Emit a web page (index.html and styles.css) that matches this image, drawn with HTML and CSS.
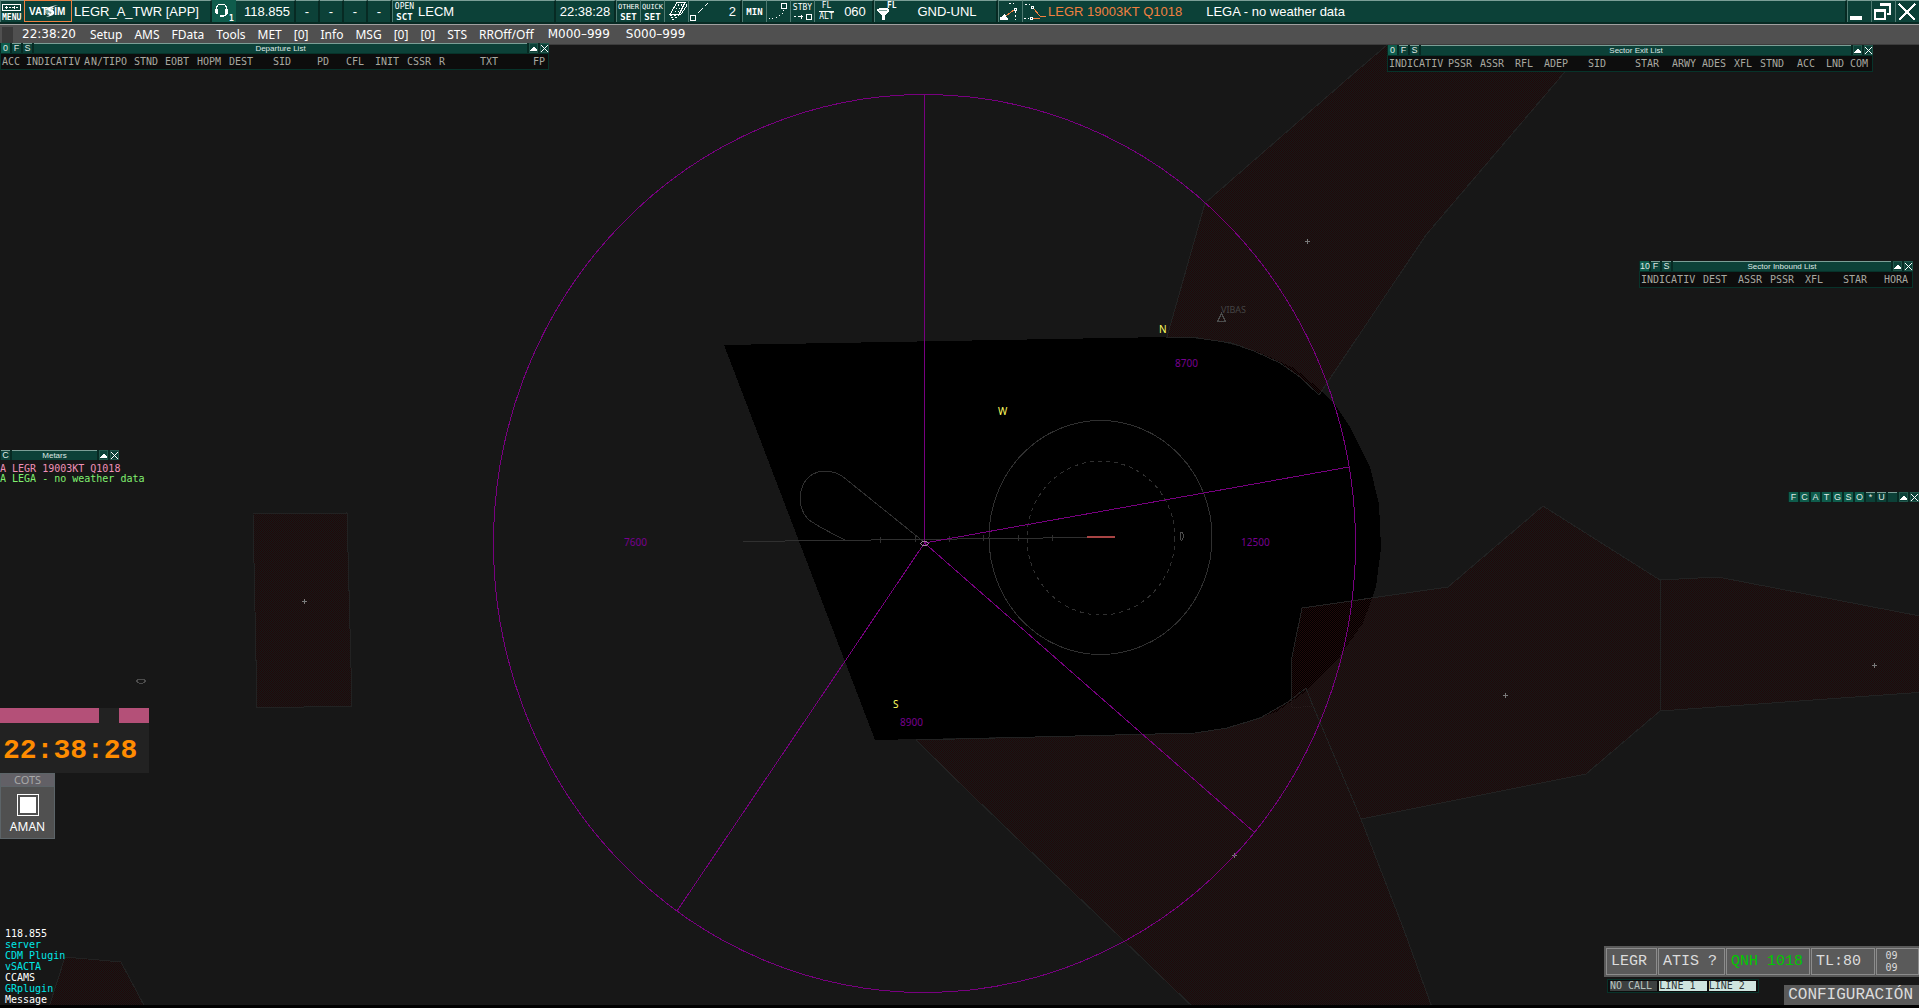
FILE: index.html
```html
<!DOCTYPE html>
<html lang="en">
<head>
    <meta charset="UTF-8">
    <meta name="viewport" content="width=device-width, initial-scale=1.0">
    <title>LEGR_A_TWR Radar</title>
    <link rel="stylesheet" href="styles.css">
</head>
<body>
    <header class="toolbar">
        <button class="tool" aria-label="Menu">
            <svg viewBox="0 0 23 21" width="23" height="21">
                <path class="line" d="M1.500 3.500h18v6h-18zM4 6.500h3M8 6.500h2M11 6.500h3M15 6.500h2M5.500 5v3M13.500 5v3"/>
                <text class="icon-text" x="1" y="19">MENU</text>
            </svg>
        </button>
        <button class="tool tool-logo" aria-label="VATSIM">
            <svg viewBox="0 0 46 20" width="46" height="20">
                <circle class="logo-globe" cx="24" cy="10" r="4"/>
                <text class="logo-text" x="4" y="14">VATSIM</text>
                <path class="logo-swirl" d="M33 4q-9 1-13 5q4-1 6 1q2 3-5 6q9-1 8-5q0-2-4-3q2-2 8-4z"/>
            </svg>
        </button>
        <div class="readout">LEGR_A_TWR [APP]</div>
        <button class="tool tool-on" aria-label="Voice">
            <svg viewBox="0 0 23 21" width="23" height="21">
                <path class="line" d="M3.500 10v-2q0-5 5-5t5 5v2M13.500 12q0 3-4 3"/>
                <path class="solid" d="M2 8h3v5H3l-1-1zM12 8h3v4l-1 1h-2zM7 14h4v2H7z"/>
                <text class="icon-text" x="16" y="20">1</text>
            </svg>
        </button>
        <div class="readout readout-right">118.855</div>
        <button class="readout readout-center">-</button>
        <button class="readout readout-center">-</button>
        <button class="readout readout-center">-</button>
        <button class="readout readout-center">-</button>
        <button class="tool tool-text"><span>OPEN</span><b>SCT</b></button>
        <div class="readout">LECM</div>
        <div class="readout readout-center">22:38:28</div>
        <button class="tool tool-text tool-narrow"><span>OTHER</span><b>SET</b></button>
        <button class="tool tool-text tool-narrow"><span>QUICK</span><b>SET</b></button>
        <button class="tool" aria-label="Sector layers">
            <svg viewBox="0 0 23 21" width="23" height="21">
                <path class="line" d="M12 1.500h8l-6 12h-9zM21.500 3v2l-6 9"/>
                <path class="line dots" d="M14 3l-4 8M17 3l-4 8M5 14.500h9M6 16.500h6M7 18.500h3"/>
            </svg>
        </button>
        <button class="tool" aria-label="Distance line">
            <svg viewBox="0 0 23 21" width="23" height="21">
                <path class="line" d="M1.500 14.500h5v5h-5zM9 12l5-5M16 5l3-3"/>
            </svg>
        </button>
        <div class="readout readout-right">2</div>
        <button class="tool tool-text"><b>MIN</b></button>
        <button class="tool" aria-label="History dots">
            <svg viewBox="0 0 23 21" width="23" height="21">
                <path class="line" d="M14.500 2.500h5v5h-5z"/>
                <path class="solid" d="M2 17h1v1H2zM5 17h1v1H5zM9 16h1v1H9zM12 14h1v1h-1zM15 12h1v1h-1zM16 9h1v1h-1z"/>
            </svg>
        </button>
        <button class="tool tool-text" aria-label="Standby">
            <span>STBY</span>
            <svg viewBox="0 0 20 8" width="20" height="8">
                <path class="line" d="M1 3.500h2M5 3.500h5M8.500 1.500v4M13.500 1.500h5v5h-5z"/>
            </svg>
        </button>
        <button class="tool tool-text tool-split"><span>FL</span><span>ALT</span></button>
        <div class="readout readout-center">060</div>
        <button class="tool" aria-label="Level filter">
            <svg viewBox="0 0 23 21" width="23" height="21">
                <path class="solid" d="M2 9q0-2 6-2t6 2v1l-4 4v5H7v-5L2 10z"/>
                <path class="shade" d="M4 9h8v1H4z"/>
                <text class="icon-text" x="12" y="7">FL</text>
            </svg>
        </button>
        <div class="readout readout-center">GND-UNL</div>
        <button class="tool" aria-label="Route display">
            <svg viewBox="0 0 23 21" width="23" height="21">
                <path class="line warm" d="M7 15l9-7"/>
                <path class="solid" d="M1 19h8v-2H8l-2-4H5l-2 3H1z"/>
                <path class="line dots" d="M10 2.500h5M16.500 10v9"/>
                <path class="line" d="M15.500 7.500h2v2h-2z"/>
            </svg>
        </button>
        <button class="tool" aria-label="Conflict display">
            <svg viewBox="0 0 23 21" width="23" height="21">
                <path class="line warm" d="M10 7l7 8M10 17.500h7M17 15.500h6"/>
                <path class="line dots" d="M2 3.500h5M1 17.500h5"/>
                <path class="line" d="M8.500 5.500h2v2h-2zM7.500 16.500h2v2h-2z"/>
            </svg>
        </button>
        <div class="readout readout-metar"><span class="warm-text">LEGR 19003KT Q1018</span><span>LEGA - no weather data</span></div>
        <button class="tool" aria-label="Minimize">
            <svg viewBox="0 0 23 21" width="23" height="21"><path class="solid" d="M2 15h12v4H2z"/></svg>
        </button>
        <button class="tool" aria-label="Restore">
            <svg viewBox="0 0 23 21" width="23" height="21">
                <path class="solid" d="M8 2h11v12h-4v-2h2V5H8zM2 8h12v11H2zM4 11v6h8v-6z" fill-rule="evenodd"/>
            </svg>
        </button>
        <button class="tool" aria-label="Close">
            <svg viewBox="0 0 23 21" width="23" height="21"><path class="cross" d="M3 3l16 16M19 3L3 19"/></svg>
        </button>
    </header>

    <nav class="menubar">
        <span class="menubar-grip"></span>
        <span class="menu-number">22:38:20</span>
        <button>Setup</button>
        <button>AMS</button>
        <button>FData</button>
        <button>Tools</button>
        <button>MET</button>
        <button>[0]</button>
        <button>Info</button>
        <button>MSG</button>
        <button>[0]</button>
        <button>[0]</button>
        <button>STS</button>
        <button>RROff/Off</button>
        <button class="menu-number">M000–999</button>
        <button class="menu-number">S000–999</button>
    </nav>

    <main class="radar">
        <svg class="map" viewBox="0 45 1919 960" preserveAspectRatio="xMinYMin slice">
            <defs>
                <pattern id="danger" width="2" height="2" patternUnits="userSpaceOnUse">
                    <path d="M0 0h1v1H0zM1 1h1v1H1z"/>
                </pattern>
            </defs>

            <!-- CTR -->
            <polygon class="ctr" points="724,345 1166,337 1191,338 1218,341 1254,350 1294,368 1318,388 1334,403 1350,427 1370,467 1379,504 1381,548 1376,587 1363,623 1336,662 1305,692 1276,712 1227,728 1195,733 875,740"/>

            <!-- restricted areas -->
            <g class="areas">
                <polygon points="1387,45 1353,74 1205,203 1167,337 1191,337 1231,343 1254,351 1280,363 1300,377 1319,395 1426,235 1564,73 1590,45"/>
                <polygon points="1302,608 1448,587 1543,506 1660,580 1660,711 1586,774 1361,819 1313,706 1291,708 1292,657"/>
                <polygon points="1660,580 1718,577 1925,617 1925,692 1660,711"/>
                <polygon points="916,740 1195,733 1227,728 1260,718 1288,702 1306,688 1313,706 1361,819 1404,930 1433,1010 1196,1010 975,798"/>
                <polygon points="253,514 347,513 352,706 257,708"/>
                <polygon points="65,957 121,962 145,1007 49,1007"/>
            </g>
            <path class="marks" d="M302 601.500h5M304.500 599v5M1305 241.500h5M1307.500 239v5M1503 695.500h5M1505.500 693v5M1872 665.500h5M1874.500 663v5M1232 855.500h5M1234.500 853v5"/>

            <!-- procedures around the field -->
            <g class="procedures">
                <ellipse cx="1100.500" cy="537.500" rx="111.500" ry="117"/>
                <ellipse class="dashed" cx="1101" cy="538" rx="74" ry="77"/>
                <path d="M743 541.500L1087 537.500M880.500 537v6M915.500 536v6M949.500 536v6M983.500 535v6M1018.500 535v6M1052.500 535v6"/>
                <path d="M924 542L842 476Q834 471 824 471Q812 472 806 480Q800 488 800 500Q801 512 808 519Q815 525 845 540"/>
            </g>
            <g class="navaids">
                <path d="M1180 536l1-4h1l2 4l-2 4h-1zM136 681l3-2h4l3 2l-3 2h-4zM1217.500 321.500h8l-4-8z"/>
            </g>
            <path class="runway" d="M1087 537h28"/>

            <!-- minimum vectoring sectors -->
            <g class="vectoring">
                <ellipse cx="924.500" cy="543.500" rx="431" ry="449"/>
                <path d="M924.500 543V94M924.500 543L1349 467M924.500 543L1254 832M924.500 543L677 911"/>
            </g>
            <path class="fix" d="M920.500 543.500l2-2h4l2 2l-2 2h-4z"/>

            <g class="altitudes">
                <text x="1175" y="367">8700</text>
                <text x="1241" y="546">12500</text>
                <text x="624" y="546">7600</text>
                <text x="900" y="726">8900</text>
            </g>
            <g class="points">
                <text x="1159" y="333">N</text>
                <text x="998" y="415">W</text>
                <text x="893" y="708">S</text>
            </g>
            <text class="fix-name" x="1221" y="313">VIBAS</text>
        </svg>

        <section class="window window-departure">
            <div class="titlebar">
                <button class="key key-on">0</button>
                <button class="key">F</button>
                <button class="key">S</button>
                <h2>Departure List</h2>
                <button class="key key-icon" aria-label="Collapse"><svg viewBox="0 0 9 9" width="9" height="9"><path class="solid" d="M1 7h7V6L5 3H4L1 6z"/></svg></button>
                <button class="key key-icon" aria-label="Close"><svg viewBox="0 0 9 9" width="9" height="9"><path class="line" d="M1 1l7 7M8 1L1 8"/></svg></button>
            </div>
            <table>
                <thead>
                    <tr><th>ACC</th><th>INDICATIV</th><th>A</th><th>N/TIPO</th><th>STND</th><th>EOBT</th><th>HOPM</th><th>DEST</th><th>SID</th><th>PD</th><th>CFL</th><th>INIT</th><th>CSSR</th><th>R</th><th>TXT</th><th>FP</th></tr>
                </thead>
            </table>
        </section>

        <section class="window window-exit">
            <div class="titlebar">
                <button class="key key-on">0</button>
                <button class="key">F</button>
                <button class="key">S</button>
                <h2>Sector Exit List</h2>
                <button class="key key-icon" aria-label="Collapse"><svg viewBox="0 0 9 9" width="9" height="9"><path class="solid" d="M1 7h7V6L5 3H4L1 6z"/></svg></button>
                <button class="key key-icon" aria-label="Close"><svg viewBox="0 0 9 9" width="9" height="9"><path class="line" d="M1 1l7 7M8 1L1 8"/></svg></button>
            </div>
            <table>
                <thead>
                    <tr><th>INDICATIV</th><th>PSSR</th><th>ASSR</th><th>RFL</th><th>ADEP</th><th>SID</th><th>STAR</th><th>ARWY</th><th>ADES</th><th>XFL</th><th>STND</th><th>ACC</th><th>LND</th><th>COM</th></tr>
                </thead>
            </table>
        </section>

        <section class="window window-inbound">
            <div class="titlebar">
                <button class="key key-on">10</button>
                <button class="key">F</button>
                <button class="key">S</button>
                <h2>Sector Inbound List</h2>
                <button class="key key-icon" aria-label="Collapse"><svg viewBox="0 0 9 9" width="9" height="9"><path class="solid" d="M1 7h7V6L5 3H4L1 6z"/></svg></button>
                <button class="key key-icon" aria-label="Close"><svg viewBox="0 0 9 9" width="9" height="9"><path class="line" d="M1 1l7 7M8 1L1 8"/></svg></button>
            </div>
            <table>
                <thead>
                    <tr><th>INDICATIV</th><th>DEST</th><th>ASSR</th><th>PSSR</th><th>XFL</th><th>STAR</th><th>HORA</th></tr>
                </thead>
            </table>
        </section>

        <section class="window window-filters">
            <div class="titlebar">
                <button class="key key-on">F</button>
                <button class="key key-on">C</button>
                <button class="key key-on">A</button>
                <button class="key key-on">T</button>
                <button class="key key-on">G</button>
                <button class="key key-on">S</button>
                <button class="key key-on">O</button>
                <button class="key">*</button>
                <button class="key">U</button>
                <button class="key" aria-label="Unassigned"></button>
                <button class="key key-icon" aria-label="Collapse"><svg viewBox="0 0 9 9" width="9" height="9"><path class="solid" d="M1 7h7V6L5 3H4L1 6z"/></svg></button>
                <button class="key key-icon" aria-label="Close"><svg viewBox="0 0 9 9" width="9" height="9"><path class="line" d="M1 1l7 7M8 1L1 8"/></svg></button>
            </div>
        </section>

        <section class="window window-metars">
            <div class="titlebar">
                <button class="key">C</button>
                <h2>Metars</h2>
                <button class="key key-icon" aria-label="Collapse"><svg viewBox="0 0 9 9" width="9" height="9"><path class="solid" d="M1 7h7V6L5 3H4L1 6z"/></svg></button>
                <button class="key key-icon" aria-label="Close"><svg viewBox="0 0 9 9" width="9" height="9"><path class="line" d="M1 1l7 7M8 1L1 8"/></svg></button>
            </div>
            <p class="metar-new">A LEGR 19003KT Q1018</p>
            <p class="metar-old">A LEGA - no weather data</p>
        </section>

        <section class="window window-clock">
            <div class="clock-bar"><span></span><span></span></div>
            <time>22:38:28</time>
        </section>

        <section class="window window-cots">
            <h2>COTS</h2>
            <label><input type="checkbox" checked>AMAN</label>
        </section>

        <ul class="window window-messages">
            <li>118.855</li>
            <li class="unread">server</li>
            <li class="unread">CDM Plugin</li>
            <li class="unread">vSACTA</li>
            <li>CCAMS</li>
            <li class="unread">GRplugin</li>
            <li>Message</li>
        </ul>

        <section class="window window-field">
            <div class="field-row">
                <button>LEGR</button>
                <button>ATIS ?</button>
                <button class="qnh">QNH 1018</button>
                <button>TL:80</button>
                <button class="runways"><span>09</span><span>09</span></button>
            </div>
            <div class="calls">
                <button class="no-call">NO CALL</button>
                <button>LINE 1</button>
                <button>LINE 2</button>
            </div>
        </section>
        <button class="window window-config">CONFIGURACIÓN</button>
    </main>
</body>
</html>
```

FILE: styles.css
```css
* {
    box-sizing: border-box;
}

body {
    margin: 0;
    height: 100vh;
    display: flex;
    flex-direction: column;
    overflow: hidden;
    background: #000;
    color: #fff;
    font-family: "Liberation Sans", Arial, sans-serif;
    font-size: 13px;
}

button {
    margin: 0;
    padding: 0;
    border: none;
    background: none;
    color: inherit;
    font: inherit;
    cursor: pointer;
}

h2, p, ul {
    margin: 0;
    padding: 0;
    font-weight: normal;
    list-style: none;
}

svg {
    display: block;
    shape-rendering: crispEdges;
}

/* Icons */
.line {
    fill: none;
    stroke: #fff;
    stroke-width: 1;
}

.solid {
    fill: #fff;
}

.shade {
    fill: #7b9f97;
}

.dots {
    stroke-dasharray: 2 2;
}

.warm {
    stroke: #f08040;
}

.cross {
    stroke: #fff;
    stroke-width: 2;
}

.icon-text {
    fill: #fff;
    font: bold 8px "DejaVu Sans Mono", monospace;
}

.logo-text {
    fill: #fff;
    font: bold 10px "Liberation Sans", Arial, sans-serif;
}

.logo-globe {
    fill: #6f9a92;
}

.logo-swirl {
    fill: #fff;
    shape-rendering: auto;
}

/* Top toolbar */
.toolbar {
    flex: none;
    display: grid;
    grid-template-columns: 24px 48px 140px 24px 60px repeat(4, 24px) 24px 140px 60px repeat(4, 24px) 30px repeat(4, 24px) 36px 24px 100px 24px 24px 1fr 24px 24px 24px;
    height: 24px;
    padding-bottom: 2px;
    background: #072a23;
}

.tool {
    border-top: 1px solid #7b9f97;
    border-left: 1px solid #4f7a71;
    background: #0c4138;
    overflow: hidden;
}

.tool-on {
    border-color: #0f5c4c;
    background: #0f5c4c;
}

.tool-logo {
    border: 1px solid #f08040;
}

.tool-text {
    display: flex;
    flex-direction: column;
    align-items: center;
    justify-content: center;
    font-family: "DejaVu Sans Mono", monospace;
    font-size: 8px;
    line-height: 10px;
    white-space: nowrap;
}

.tool-text b {
    font-size: 9px;
}

.tool-narrow {
    font-size: 7px;
}

.tool-split span + span {
    border-top: 1px solid #fff;
}

.readout {
    padding: 0 2px;
    border-top: 1px solid #7b9f97;
    border-right: 2px solid #072a23;
    background: #0c4138;
    line-height: 21px;
    white-space: nowrap;
    text-align: left;
}

.readout-right {
    padding-right: 4px;
    text-align: right;
}

.readout-center {
    text-align: center;
}

.readout-metar {
    display: flex;
    gap: 24px;
}

.warm-text {
    color: #f08040;
}

/* Menu bar */
.menubar {
    flex: none;
    display: flex;
    align-items: center;
    gap: 12px;
    height: 21px;
    border-top: 1px solid #a0a0a0;
    border-bottom: 1px solid #3c3c3c;
    background: #505050;
    font-family: "Noto Sans", sans-serif;
    font-size: 12px;
    line-height: 19px;
}

.menubar-grip {
    width: 11px;
    height: 16px;
    margin-left: 2px;
    margin-right: -5px;
    background: #3a3a3a;
}

.menu-number {
    padding: 0 2px;
    font-family: "DejaVu Sans", sans-serif;
}

/* Radar screen */
.radar {
    position: relative;
    flex: 1;
    margin-bottom: 3px;
    background: #171717;
}

.map {
    position: absolute;
    width: 100%;
    height: 100%;
    font-family: "Noto Sans", sans-serif;
    font-size: 10px;
}

.ctr {
    fill: #000;
}

#danger path {
    fill: #200909;
}

.areas polygon {
    fill: url(#danger);
    stroke: #222;
}

.marks {
    stroke: #7a7a7a;
}

.procedures {
    fill: none;
    stroke: #303030;
}

.dashed {
    stroke-dasharray: 4 4;
}

.navaids {
    fill: none;
    stroke: #4c4c4c;
}

.runway {
    stroke: #a84444;
    stroke-width: 2;
}

.vectoring {
    fill: none;
    stroke: #780080;
}

.fix {
    fill: none;
    stroke: #a080a0;
}

.altitudes {
    fill: #780090;
}

.points {
    fill: #ffff60;
}

.fix-name {
    fill: #444;
    font-size: 9px;
}

/* Floating windows */
.window {
    position: absolute;
}

.titlebar {
    display: flex;
    gap: 2px;
    height: 10px;
    padding-left: 1px;
    background: #072a23;
    color: #dfe8e5;
    font-size: 9px;
    line-height: 9px;
}

.titlebar h2 {
    flex: 1;
    border-top: 1px solid #7b9f97;
    background: #0c4138;
    font-size: 8px;
    text-align: center;
}

.key {
    width: 9px;
    border-top: 1px solid #7b9f97;
    background: #0c4138;
    text-align: center;
}

.key-on {
    border-color: #0f5c4c;
    background: #0f5c4c;
}

.key-icon {
    outline: 1px solid #23574c;
    outline-offset: -1px;
}

.window table {
    display: block;
    border: 1px solid #07332a;
    background: #0d0d0d;
}

.window thead {
    display: block;
}

.window tr {
    display: grid;
    height: 15px;
    padding-left: 1px;
}

.window th {
    padding: 0;
    color: #a8a8a0;
    font: 10px/15px "DejaVu Sans Mono", monospace;
    text-align: left;
    white-space: nowrap;
}

.window-departure {
    top: -2px;
    left: 0;
    width: 549px;
}

.window-departure tr {
    grid-template-columns: 24px 58px 7px 43px 31px 32px 32px 44px 44px 29px 29px 32px 32px 41px 53px 1fr;
}

.window-exit {
    top: 0;
    right: 46px;
    width: 486px;
}

.window-exit tr {
    grid-template-columns: 59px 32px 35px 29px 44px 47px 37px 30px 32px 26px 37px 29px 24px 1fr;
}

.window-inbound {
    top: 216px;
    right: 6px;
    width: 274px;
}

.window-inbound tr {
    grid-template-columns: 62px 35px 32px 35px 38px 41px 1fr;
}

.window-filters {
    top: 447px;
    right: 0;
}

.window-metars {
    top: 405px;
    left: 0;
    width: 119px;
}

.window-metars p {
    font: 10px/10px "DejaVu Sans Mono", monospace;
    white-space: nowrap;
}

.window-metars .titlebar {
    margin-bottom: 4px;
}

.metar-new {
    color: #f090b8;
}

.metar-old {
    color: #80f070;
}

/* Clock */
.window-clock {
    top: 663px;
    left: 0;
    width: 149px;
    height: 65px;
    background: #222;
}

.clock-bar {
    display: flex;
    justify-content: space-between;
    height: 15px;
}

.clock-bar span {
    width: 30px;
    background: #b45078;
}

.clock-bar span:first-child {
    width: 99px;
}

.window-clock time {
    display: block;
    padding: 3px 0 0 3px;
    color: #ff8c00;
    font: bold 28px/50px "Liberation Mono", monospace;
}

/* COTS */
.window-cots {
    top: 728px;
    left: 0;
    width: 55px;
    border: 1px solid #5c6468;
    background: #505050;
    font-family: "Noto Sans", sans-serif;
    text-align: center;
}

.window-cots h2 {
    border-bottom: 1px solid #5c6468;
    background: #626066;
    color: #a8a8a8;
    font-size: 11px;
    line-height: 12px;
}

.window-cots label {
    display: flex;
    flex-direction: column;
    align-items: center;
    gap: 2px;
    padding: 7px 0 2px;
    font-size: 12px;
    line-height: 18px;
}

.window-cots input {
    appearance: none;
    width: 22px;
    height: 22px;
    margin: 0;
    padding: 2px;
    border: 1px solid #fff;
}

.window-cots input:checked {
    background: #fff content-box;
}

/* Message channels */
.window-messages {
    left: 5px;
    bottom: 0;
    font: 10px/11px "DejaVu Sans Mono", monospace;
}

.unread {
    color: #00e8e8;
}

/* Airfield panel */
.window-field {
    right: 0;
    bottom: 12px;
    width: 315px;
}

.field-row {
    display: grid;
    grid-template-columns: 51px 67px 84px 64px 1fr;
    gap: 1px;
    height: 31px;
    padding: 2px 0 2px 2px;
    background: #5a5a5a;
    color: #dcdcdc;
    font: 15px "Liberation Mono", monospace;
}

.field-row button {
    padding-left: 4px;
    border: 1px solid #8c8c8c;
    text-align: left;
    white-space: nowrap;
}

.field-row .qnh {
    color: #00c800;
}

.field-row .runways {
    display: flex;
    flex-direction: column;
    align-items: center;
    justify-content: center;
    padding: 0 12px 0 0;
    font: 10px/12px "DejaVu Sans Mono", monospace;
}

.calls {
    display: flex;
    gap: 2px;
    width: 152px;
    height: 14px;
    margin: 2px 0 0 3px;
    padding: 1px 2px;
    border: 1px solid #07332a;
    background: #0d0d0d;
    color: #303838;
    font: 10px/10px "DejaVu Sans Mono", monospace;
}

.calls button {
    flex: 1;
    background: #cfe5df;
    text-align: left;
    white-space: nowrap;
}

.calls .no-call {
    background: #3c4040;
    color: #b8c4c0;
}

.window-config {
    right: 0;
    bottom: 0;
    padding: 0 6px 0 4px;
    background: #5a5a5a;
    color: #dcdcdc;
    font: 16px/20px "Liberation Mono", monospace;
}
```
